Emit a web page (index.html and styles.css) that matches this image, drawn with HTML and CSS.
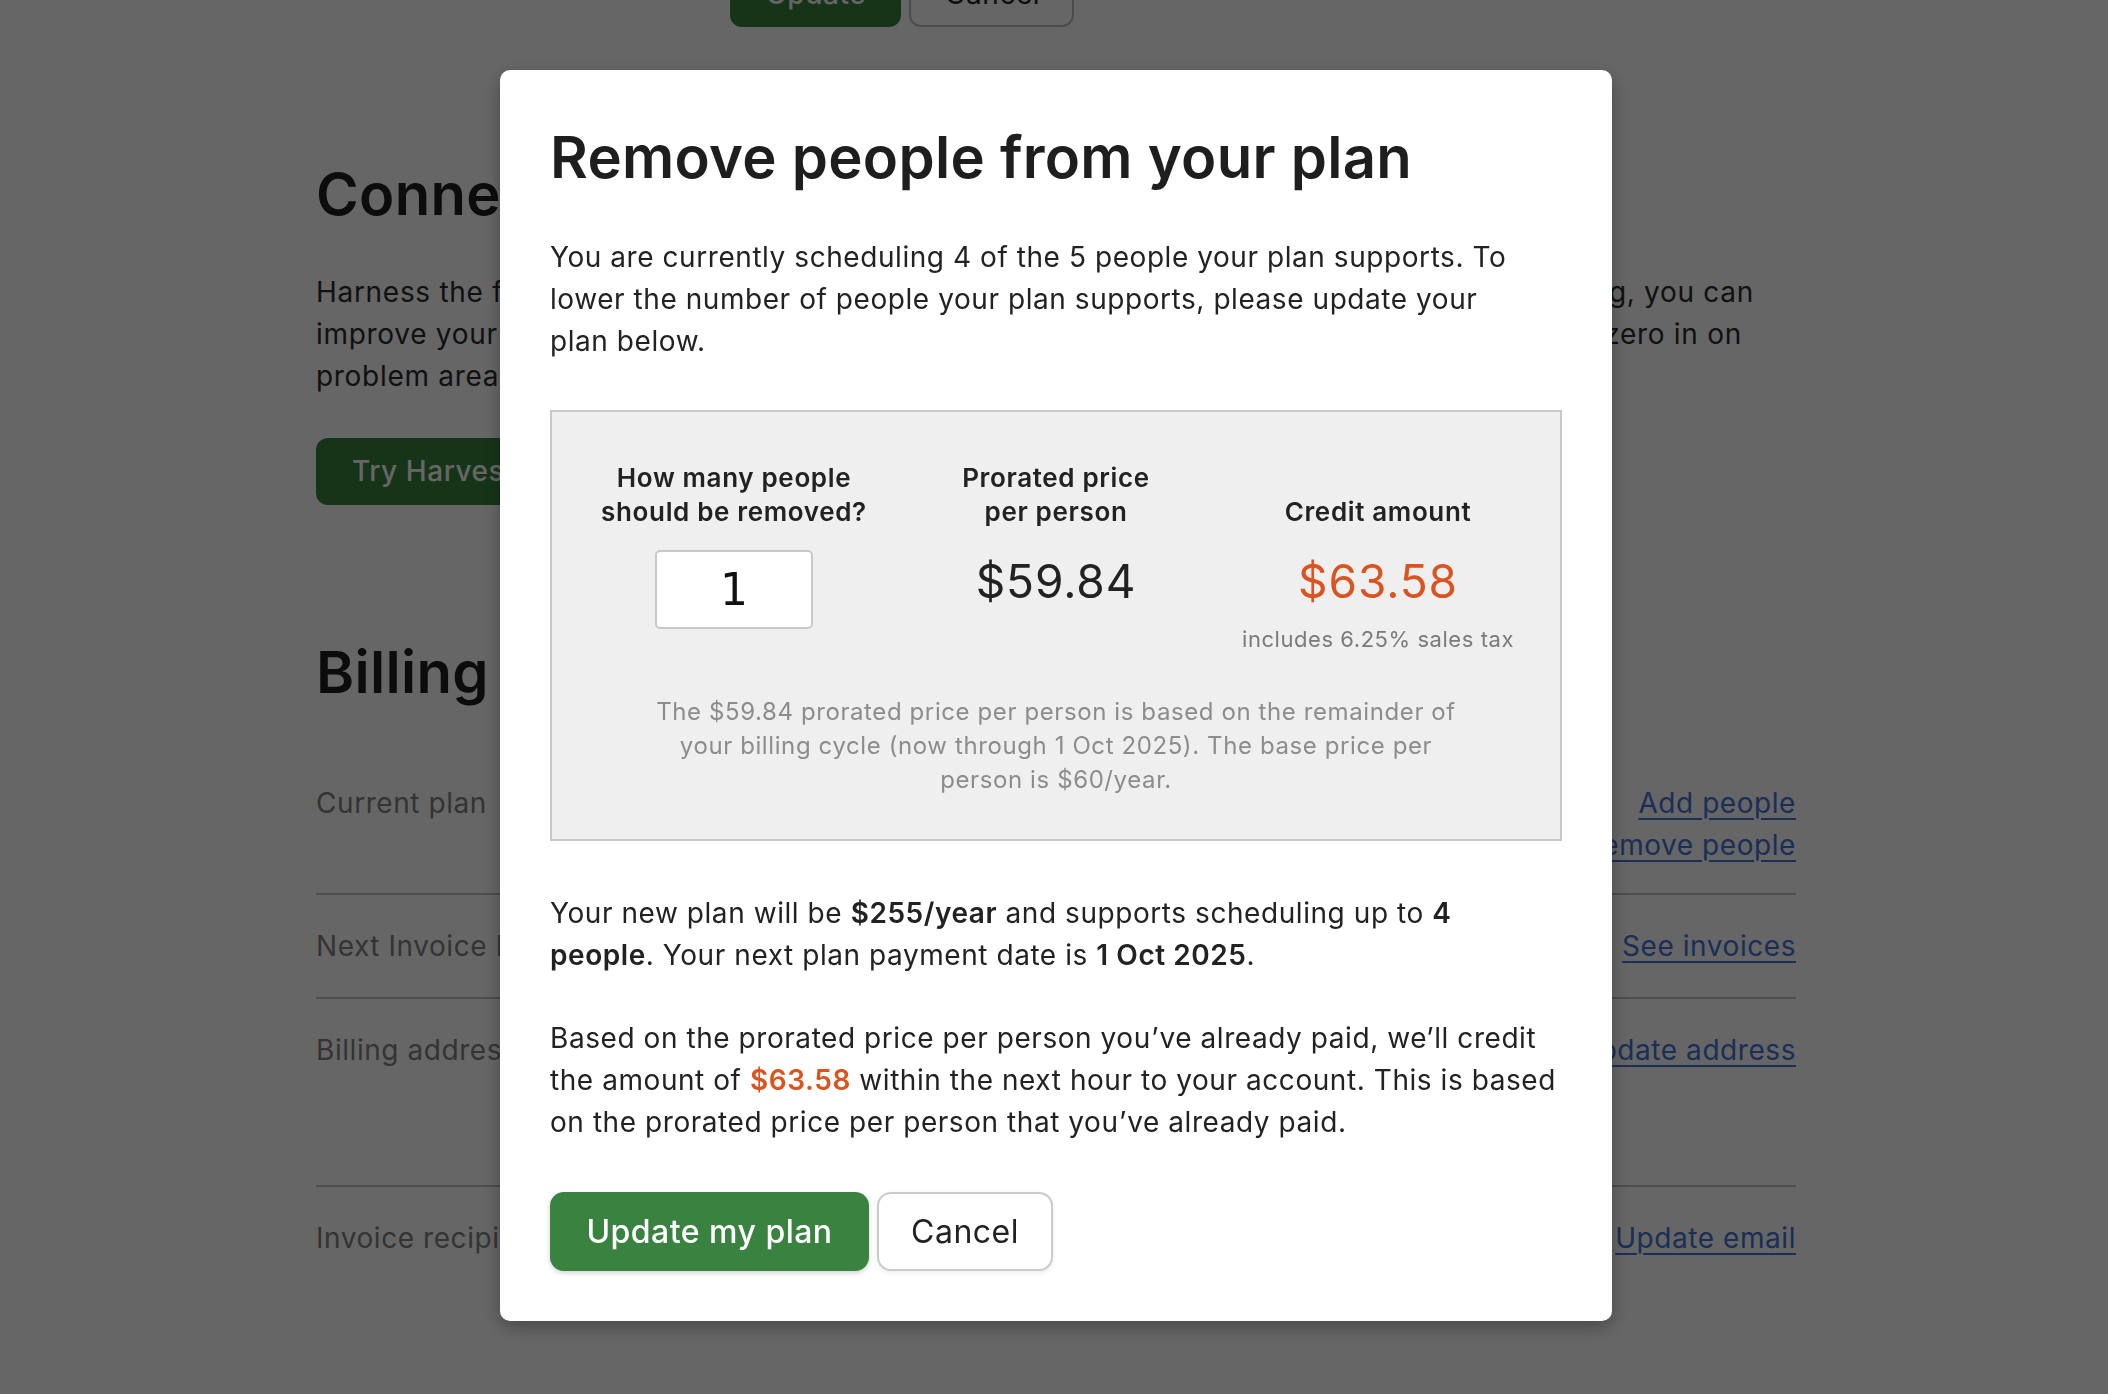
FILE: index.html
```html
<!DOCTYPE html>
<html lang="en">
<head>
<meta charset="utf-8">
<title>Remove people from your plan</title>
<link rel="stylesheet" href="styles.css">
</head>
<body>
<div class="page">
  <div class="form-actions">
    <button class="btn btn-green">Update</button>
    <button class="btn btn-outline">Cancel</button>
  </div>

  <section class="section">
    <h2 class="section-title">Connect to Harvest</h2>
    <p class="section-text">Harness the full power of your time tracking data. By connecting Harvest with your scheduling, you can<br>improve your estimates, compare your planned hours against actual hours worked, and then zero in on<br>problem areas.</p>
    <button class="btn btn-green btn-try">Try Harvest for free</button>
  </section>

  <section class="section billing">
    <h2 class="section-title">Billing</h2>
    <div class="row first">
      <div class="row-label">Current plan</div>
      <div class="row-value">5 people<br>$300/year</div>
      <div class="row-links"><a href="#">Add people</a><a href="#">Remove people</a></div>
    </div>
    <div class="row">
      <div class="row-label">Next Invoice Date</div>
      <div class="row-value">1 Oct 2025</div>
      <div class="row-links"><a href="#">See invoices</a></div>
    </div>
    <div class="row">
      <div class="row-label">Billing address</div>
      <div class="row-value">12 Main Street<br>Boston, MA 02110<br>United States</div>
      <div class="row-links"><a href="#">Update address</a></div>
    </div>
    <div class="row">
      <div class="row-label">Invoice recipients</div>
      <div class="row-value">billing@example.com</div>
      <div class="row-links"><a href="#">Update email</a></div>
    </div>
  </section>
</div>

<div class="overlay">
  <div class="modal">
    <h1 class="modal-title">Remove people from your plan</h1>
    <p class="modal-text intro">You are currently scheduling 4 of the 5 people your plan supports. To<br>lower the number of people your plan supports, please update your<br>plan below.</p>

    <div class="calc">
      <div class="calc-cols">
        <div class="calc-col">
          <div class="calc-label">How many people<br>should be removed?</div>
          <input class="calc-input" type="text" value="1">
        </div>
        <div class="calc-col">
          <div class="calc-label">Prorated price<br>per person</div>
          <div class="calc-price">$59.84</div>
        </div>
        <div class="calc-col">
          <div class="calc-label">Credit amount</div>
          <div class="calc-price credit">$63.58</div>
          <div class="calc-sub">includes 6.25% sales tax</div>
        </div>
      </div>
      <p class="calc-note">The $59.84 prorated price per person is based on the remainder of<br>your billing cycle (now through 1 Oct 2025). The base price per<br>person is $60/year.</p>
    </div>

    <p class="modal-text summary">Your new plan will be <strong>$255/year</strong> and supports scheduling up to <strong>4<br>people</strong>. Your next plan payment date is <strong>1 Oct 2025</strong>.</p>
    <p class="modal-text credit-text">Based on the prorated price per person you’ve already paid, we’ll credit<br>the amount of <strong class="orange">$63.58</strong> within the next hour to your account. This is based<br>on the prorated price per person that you’ve already paid.</p>

    <div class="modal-actions">
      <button class="mbtn mbtn-primary">Update my plan</button>
      <button class="mbtn mbtn-secondary">Cancel</button>
    </div>
  </div>
</div>
</body>
</html>
```

FILE: styles.css
```css
* { box-sizing: border-box; }

html, body {
  margin: 0;
  padding: 0;
  background: #ffffff;
  font-family: Inter, "Noto Sans", "Liberation Sans", sans-serif;
  color: #222;
  overflow: hidden;
}

.page {
  width: 1796px;
  padding-left: 316px;
  height: 1394px;
}

.form-actions {
  display: flex;
  gap: 8px;
  margin-top: -40px;
  margin-left: 414px;
}

.btn {
  height: 67px;
  border-radius: 12px;
  font-family: inherit;
  font-size: 28px;
  letter-spacing: 0.02em;
  padding: 0 34px;
  border: 2px solid transparent;
  cursor: pointer;
  text-align: left;
  white-space: nowrap;
}

.btn-green {
  background: #37823e;
  color: #ffffff;
  font-weight: 500;
}

.form-actions .btn-green { width: 171px; }

.btn-outline {
  background: #ffffff;
  border-color: #bdbdbd;
  color: #222;
  width: 165px;
}

.section-title {
  margin: 133px 0 0;
  font-size: 58px;
  line-height: 1.2;
  font-weight: 600;
  letter-spacing: 0.005em;
  color: #1e1e1e;
}

.section-text {
  margin: 41px 0 0;
  font-size: 28px;
  line-height: 42px;
  letter-spacing: 0.025em;
  color: #2b2b2b;
  white-space: nowrap;
}

.btn-try {
  margin-top: 41px;
  display: block;
}

.billing .section-title { margin-top: 133px; margin-bottom: 45px; }

.row {
  display: grid;
  grid-template-columns: 414px 1fr auto;
  padding: 30px 0;
  border-bottom: 2px solid #c4c4c4;
  font-size: 28px;
  line-height: 42px;
  letter-spacing: 0.02em;
}

.row.first { padding-bottom: 27px; }
.row:last-child { border-bottom: none; }

.row-label { color: #828282; white-space: nowrap; }
.row-value { color: #333; }

.row-links {
  display: flex;
  flex-direction: column;
  align-items: flex-end;
}

.row-links a {
  color: #4573d8;
  text-decoration: underline;
  text-decoration-thickness: 2px;
  text-underline-offset: 5px;
}

/* overlay + modal */
.overlay {
  position: fixed;
  inset: 0;
  background: rgba(0, 0, 0, 0.6);
  padding: 70px 0 0 500px;
}

.modal {
  width: 1112px;
  background: #ffffff;
  border-radius: 10px;
  padding: 53px 50px 50px;
  box-shadow: 0 6px 18px rgba(0, 0, 0, 0.3);
}

.modal-title {
  margin: 0;
  font-size: 58px;
  line-height: 1.2;
  font-weight: 600;
  letter-spacing: 0.005em;
  color: #1e1e1e;
}

.modal-text {
  margin: 43px 0 0;
  font-size: 28px;
  line-height: 42px;
  letter-spacing: 0.02em;
  color: #222;
  white-space: nowrap;
}

.modal-text.summary { margin-top: 51px; }
.modal-text.credit-text { margin-top: 41px; }
.modal-text strong { font-weight: 600; }
.orange { color: #d9541f; }

.calc {
  margin-top: 48px;
  background: #efefef;
  border: 2px solid #c8c8c8;
  padding: 49px 21px 42px;
}

.calc-cols {
  display: grid;
  grid-template-columns: repeat(3, 1fr);
}

.calc-col {
  display: flex;
  flex-direction: column;
  align-items: center;
}

.calc-label {
  height: 68px;
  display: flex;
  align-items: flex-end;
  justify-content: center;
  text-align: center;
  font-size: 26px;
  line-height: 34px;
  font-weight: 600;
  letter-spacing: 0.025em;
  color: #222;
  margin-bottom: 21px;
}

.calc-input {
  width: 158px;
  height: 79px;
  border: 2px solid #c8c8c8;
  border-radius: 5px;
  background: #fff;
  text-align: center;
  font-family: "DejaVu Sans", sans-serif;
  font-size: 44px;
  color: #111;
  padding: 0;
}

.calc-price {
  font-size: 46px;
  line-height: 62px;
  letter-spacing: 0.02em;
  color: #222;
}

.calc-price.credit { color: #d9541f; }

.calc-sub {
  margin-top: 12px;
  font-size: 22px;
  line-height: 30px;
  letter-spacing: 0.025em;
  color: #7a7a7a;
}

.calc-note {
  margin: 41px 0 0;
  text-align: center;
  font-size: 24px;
  line-height: 34px;
  letter-spacing: 0.025em;
  color: #8c8c8c;
  white-space: nowrap;
}

.modal-actions {
  display: flex;
  gap: 8px;
  margin-top: 49px;
}

.mbtn {
  height: 79px;
  border-radius: 14px;
  font-family: inherit;
  font-size: 32px;
  letter-spacing: 0.015em;
  padding: 0;
  cursor: pointer;
}

.mbtn-primary {
  width: 319px;
  background: #3a8240;
  color: #fff;
  border: none;
  font-weight: 500;
  box-shadow: 0 2px 5px rgba(0, 0, 0, 0.18);
}

.mbtn-secondary {
  width: 176px;
  background: #fff;
  color: #222;
  border: 2px solid #cbcbcb;
  box-shadow: 0 2px 5px rgba(0, 0, 0, 0.08);
}
```
